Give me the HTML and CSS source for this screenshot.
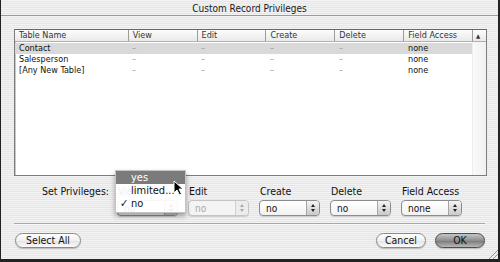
FILE: index.html
```html
<!DOCTYPE html>
<html>
<head>
    <title>Custom Record Privileges</title>
    <link rel="stylesheet" href="styles.css">
</head>
<body>
    <div class="window">
        <div class="titlebar">Custom Record Privileges</div>
        <div class="content">
            <div class="listbox">
                <div class="row head">
                    <div class="cell c-name">Table Name</div>
                    <div class="cell">View</div>
                    <div class="cell">Edit</div>
                    <div class="cell">Create</div>
                    <div class="cell">Delete</div>
                    <div class="cell">Field Access</div>
                    <div class="cell c-sort">&#9650;</div>
                </div>
                <div class="rows">
                    <div class="row selected">
                        <div class="cell c-name">Contact</div>
                        <div class="cell dash">&ndash;</div>
                        <div class="cell dash">&ndash;</div>
                        <div class="cell dash">&ndash;</div>
                        <div class="cell dash">&ndash;</div>
                        <div class="cell">none</div>
                    </div>
                    <div class="row">
                        <div class="cell c-name">Salesperson</div>
                        <div class="cell dash">&ndash;</div>
                        <div class="cell dash">&ndash;</div>
                        <div class="cell dash">&ndash;</div>
                        <div class="cell dash">&ndash;</div>
                        <div class="cell">none</div>
                    </div>
                    <div class="row">
                        <div class="cell c-name">[Any New Table]</div>
                        <div class="cell dash">&ndash;</div>
                        <div class="cell dash">&ndash;</div>
                        <div class="cell dash">&ndash;</div>
                        <div class="cell dash">&ndash;</div>
                        <div class="cell">none</div>
                    </div>
                </div>
            </div>

            <div class="privileges">
                <div class="set-label">Set Privileges:</div>
                <div class="field">
                    <div class="field-label">View</div>
                    <div class="popup"><span>no</span><i class="stepper"></i></div>
                    <div class="menu">
                        <div class="menu-item hilite">yes</div>
                        <div class="menu-item">limited...</div>
                        <div class="menu-item"><b class="check">&#10003;</b>no</div>
                        <svg class="cursor" width="11" height="16" viewBox="0 0 11 16">
                            <path d="M1 1 L1 13 L4 10 L6.5 15 L8.5 14 L6 9 L10 9 Z" fill="#000" stroke="#fff" stroke-width="1"/>
                        </svg>
                    </div>
                </div>
                <div class="field">
                    <div class="field-label">Edit</div>
                    <div class="popup disabled"><span>no</span><i class="stepper"></i></div>
                </div>
                <div class="field">
                    <div class="field-label">Create</div>
                    <div class="popup"><span>no</span><i class="stepper"></i></div>
                </div>
                <div class="field">
                    <div class="field-label">Delete</div>
                    <div class="popup"><span>no</span><i class="stepper"></i></div>
                </div>
                <div class="field">
                    <div class="field-label">Field Access</div>
                    <div class="popup"><span>none</span><i class="stepper"></i></div>
                </div>
            </div>

            <div class="separator"></div>

            <div class="buttons">
                <button class="btn">Select All</button>
                <div class="spacer"></div>
                <button class="btn cancel">Cancel</button>
                <button class="btn default">OK</button>
            </div>
        </div>
        <div class="grip"></div>
    </div>
</body>
</html>
```

FILE: styles.css
```css
* {
    box-sizing: border-box;
}
body {
    margin: 0;
    font-family: "DejaVu Sans Condensed", "DejaVu Sans", sans-serif;
    color: #111;
}
.window {
    position: relative;
    width: 500px;
    height: 262px;
    border: 1px solid #222;
    border-top: none;
    border-bottom-width: 3px;
    border-right-width: 2px;
    background: repeating-linear-gradient(#f3f3f3 0 1px, #e6e6e6 1px 2px);
    display: flex;
    flex-direction: column;
}
.titlebar {
    height: 16px;
    border-bottom: 1px solid #9a9a9a;
    text-align: center;
    font-size: 10px;
    line-height: 17px;
    color: #1a1a1a;
}
.content {
    padding: 13px 12px 0 13px;
    display: flex;
    flex-direction: column;
}

/* table list */
.listbox {
    width: 473px;
    height: 147px;
    border: 1px solid #7c7c7c;
    border-top-color: #666;
    background: #fff;
    box-shadow: inset 1px 1px 0 #c8c8c8;
    font-size: 9px;
    position: relative;
}
.listbox:after {
    content: "";
    position: absolute;
    right: 0;
    top: 12px;
    bottom: 0;
    width: 13px;
    border-left: 1px solid #ededed;
    background: linear-gradient(90deg, #fafafa, #f0f0f0);
}
.row {
    display: flex;
    height: 11px;
    line-height: 11px;
}
.row .cell {
    width: 69px;
    padding-left: 4px;
    white-space: nowrap;
    overflow: hidden;
}
.row .c-name {
    width: 113px;
}
.head {
    height: 12px;
    line-height: 11px;
    background: linear-gradient(#fdfdfd, #e9e9e9);
    border-bottom: 1px solid #b0b0b0;
    color: #333;
}
.head .cell {
    border-right: 1px solid #9c9c9c;
}
.head .c-name {
    width: 114px;
}
.head .c-sort {
    width: 13px;
    border-right: none;
    padding-left: 3px;
    font-size: 6px;
    color: #333;
}
.rows {
    padding-top: 1px;
}
.selected {
    width: 458px;
    background: #d9d9d9;
}
.dash {
    color: #999;
}

/* privileges row */
.privileges {
    display: flex;
    align-items: flex-start;
    margin-top: 9px;
    font-size: 10.5px;
}
.set-label {
    width: 103px;
    text-align: right;
    padding-right: 8px;
    line-height: 13px;
    white-space: nowrap;
}
.field {
    width: 61px;
    margin-right: 10px;
    display: flex;
    flex-direction: column;
    gap: 2px;
    position: relative;
}
.field-label {
    line-height: 13px;
    padding-left: 1px;
    white-space: nowrap;
}
.popup {
    height: 16px;
    border: 1px solid #8c8c8c;
    border-radius: 4px;
    background: linear-gradient(#ffffff, #f2f2f2);
    box-shadow: 0 1px 0 #cfcfcf;
    display: flex;
    align-items: center;
    font-size: 10px;
    padding-left: 6px;
    position: relative;
}
.popup span {
    flex: 1;
}
.stepper {
    width: 13px;
    height: 14px;
    border-left: 1px solid #a4a4a4;
    border-radius: 0 3px 3px 0;
    background: linear-gradient(#f4f4f4, #c9c9c9);
    position: relative;
}
.stepper:before, .stepper:after {
    content: "";
    position: absolute;
    left: 4px;
    border-left: 2.5px solid transparent;
    border-right: 2.5px solid transparent;
}
.stepper:before {
    top: 3px;
    border-bottom: 3px solid #222;
}
.stepper:after {
    bottom: 3px;
    border-top: 3px solid #222;
}
.disabled {
    color: #aaa;
    border-color: #c4c4c4;
    background: #f4f4f4;
}
.disabled .stepper {
    border-left-color: #d0d0d0;
    background: #ececec;
}
.disabled .stepper:before {
    border-bottom-color: #aaa;
}
.disabled .stepper:after {
    border-top-color: #aaa;
}

/* open popup menu */
.menu {
    position: absolute;
    left: -2px;
    top: -15px;
    width: 71px;
    background: rgba(255, 255, 255, 0.93);
    border: 1px solid #c4c4c4;
    box-shadow: 0 3px 5px rgba(0, 0, 0, 0.35);
    padding: 0 0 2px;
    font-size: 11px;
    z-index: 2;
}
.menu-item {
    height: 13px;
    line-height: 13px;
    padding-left: 15px;
    color: #111;
    position: relative;
}
.menu-item.hilite {
    background: #7b7b7b;
    color: #fff;
}
.check {
    position: absolute;
    left: 4px;
    font-weight: normal;
}
.cursor {
    position: absolute;
    left: 57px;
    top: 9px;
}

.separator {
    margin-top: 7px;
    width: 471px;
    height: 2px;
    border-top: 1px solid #a8a8a8;
    border-bottom: 1px solid #fafafa;
}

/* buttons */
.buttons {
    display: flex;
    align-items: center;
    margin-top: 8px;
    width: 471px;
    padding-left: 1px;
}
.spacer {
    flex: 1;
}
.btn {
    height: 15px;
    width: 66px;
    padding: 0;
    font-family: "DejaVu Sans Condensed", "DejaVu Sans", sans-serif;
    font-size: 10.5px;
    line-height: 13px;
    color: #111;
    border: 1px solid #8a8a8a;
    border-radius: 8px;
    background: linear-gradient(#ffffff 0%, #f1f1f1 50%, #e2e2e2 51%, #fbfbfb 100%);
    box-shadow: 0 1px 1px #bdbdbd;
}
.cancel {
    width: 50px;
    margin-right: 9px;
}
.default {
    width: 50px;
    border-color: #4d4d4d;
    background: linear-gradient(#c6c6c6 0%, #8e8e8e 50%, #777 51%, #b8b8b8 100%);
    color: #111;
}
.grip {
    position: absolute;
    right: 0;
    bottom: 0;
    width: 10px;
    height: 10px;
    background: linear-gradient(135deg, transparent 55%, #999 55% 60%, transparent 60% 72%, #999 72% 77%, transparent 77%);
}
```
